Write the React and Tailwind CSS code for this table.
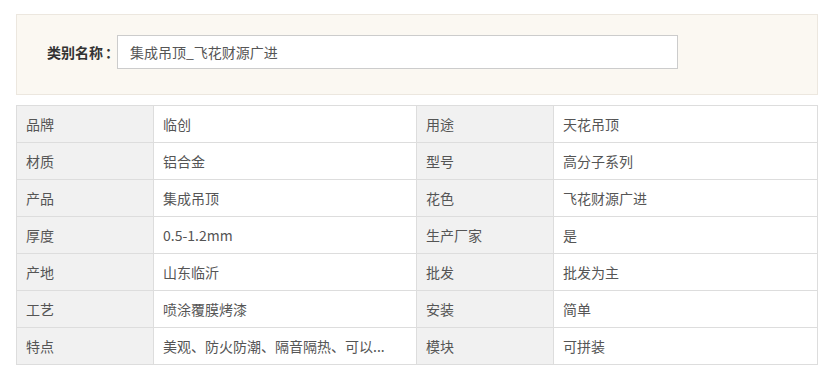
const rows = [
  ["品牌", "临创", "用途", "天花吊顶"],
  ["材质", "铝合金", "型号", "高分子系列"],
  ["产品", "集成吊顶", "花色", "飞花财源广进"],
  ["厚度", "0.5-1.2mm", "生产厂家", "是"],
  ["产地", "山东临沂", "批发", "批发为主"],
  ["工艺", "喷涂覆膜烤漆", "安装", "简单"],
  ["特点", "美观、防火防潮、隔音隔热、可以...", "模块", "可拼装"],
];

function Cell({ label, children }) {
  return (
    <div
      className={`h-[37px] flex items-center pl-[9px] border-r border-b border-[#dddddd] text-[14px] text-[#555555] truncate ${
        label ? "bg-[#f1f1f1]" : "bg-white"
      }`}
    >
      {children}
    </div>
  );
}

export default function App() {
  return (
    <div
      className="w-[831px] h-[379px] bg-white pl-[16px] pt-[14px]"
      style={{ fontFamily: '"Microsoft YaHei", "Noto Sans CJK SC", sans-serif' }}
    >
      <div className="w-[802px] h-[81px] bg-[#fbf8f2] border border-[#ece7df] pl-[30px] pt-[20px] flex items-start">
        <span className="h-[34px] w-[70px] shrink-0 whitespace-nowrap flex items-center text-[14px] font-bold text-[#333333]">
          类别名称<span className="ml-[2px]">：</span>
        </span>
        <div className="w-[561px] h-[34px] bg-white border border-[#cccccc] flex items-center pl-[12px] text-[14px] text-[#555555]">
          集成吊顶_飞花财源广进
        </div>
      </div>

      <div className="mt-[10px] w-[802px] border-t border-l border-[#dddddd] grid grid-cols-[137px_263px_137px_264px]">
        {rows.map((r, i) => (
          <div key={i} className="contents">
            <Cell label>{r[0]}</Cell>
            <Cell>{r[1]}</Cell>
            <Cell label>{r[2]}</Cell>
            <Cell>{r[3]}</Cell>
          </div>
        ))}
      </div>
    </div>
  );
}
